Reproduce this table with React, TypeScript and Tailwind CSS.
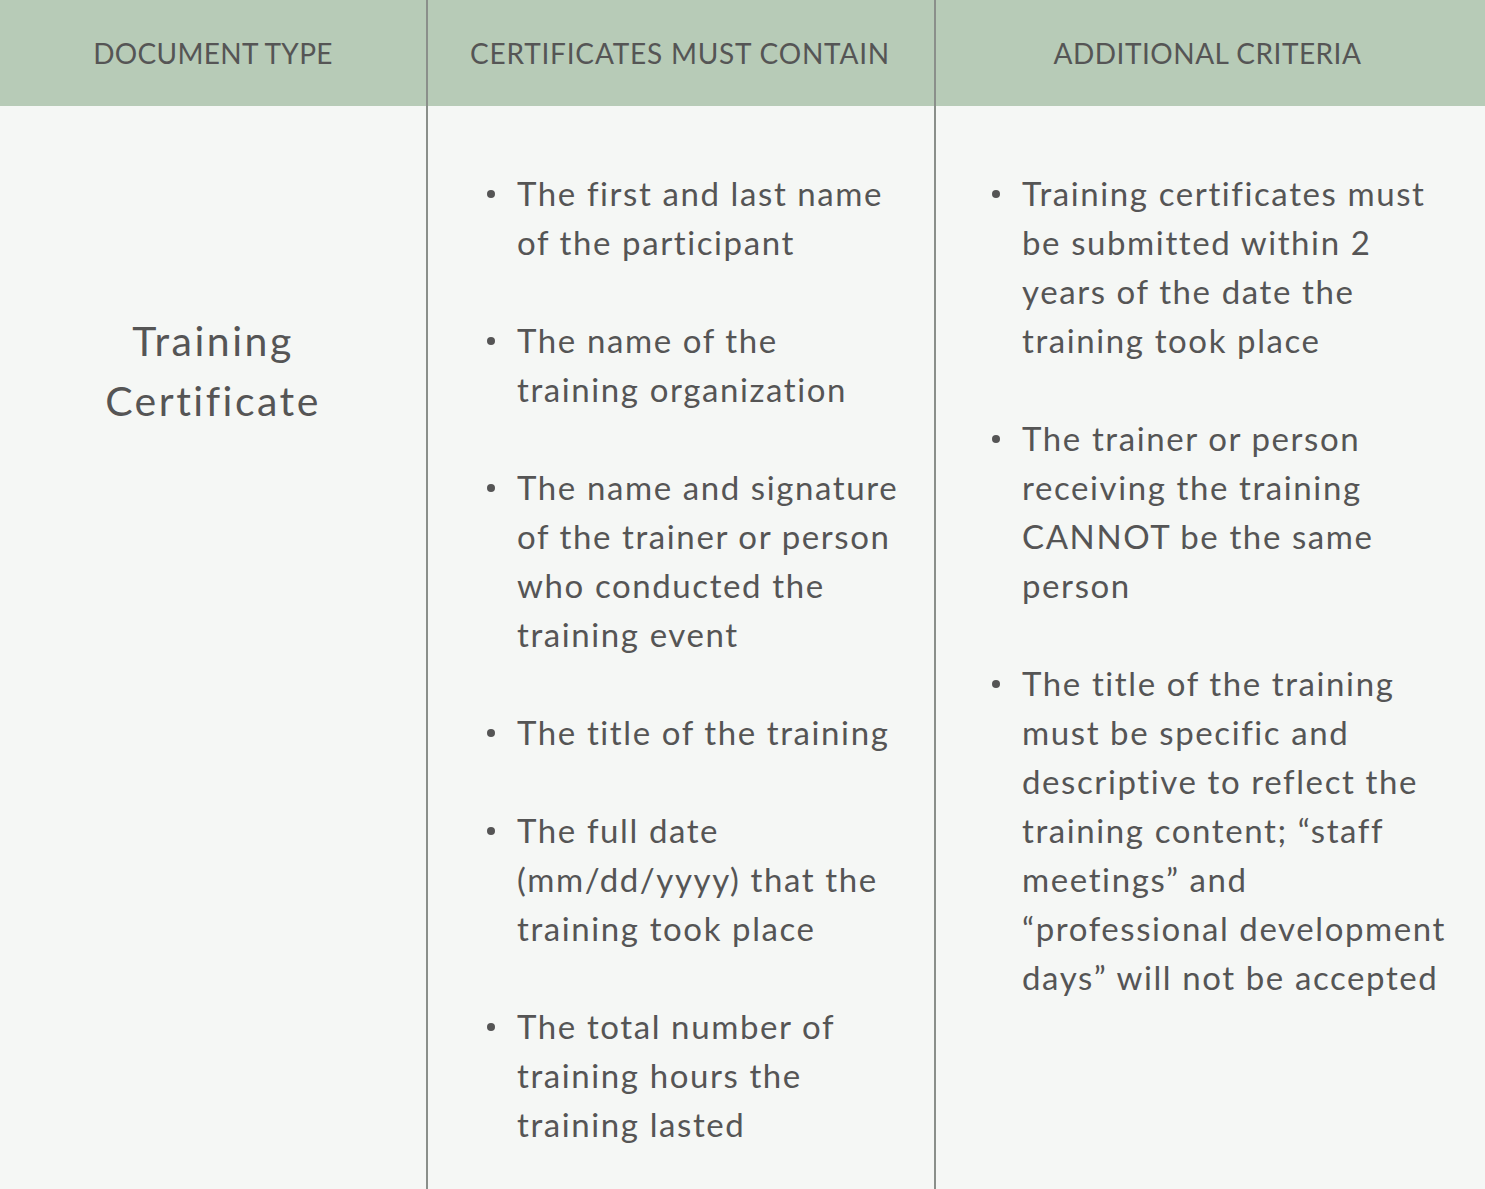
const mustContain: string[][] = [
  ["The first and last name", "of the participant"],
  ["The name of the", "training organization"],
  ["The name and signature", "of the trainer or person", "who conducted the", "training event"],
  ["The title of the training"],
  ["The full date", "(mm/dd/yyyy) that the", "training took place"],
  ["The total number of", "training hours the", "training lasted"],
];

const criteria: string[][] = [
  ["Training certificates must", "be submitted within 2", "years of the date the", "training took place"],
  ["The trainer or person", "receiving the training", "CANNOT be the same", "person"],
  [
    "The title of the training",
    "must be specific and",
    "descriptive to reflect the",
    "training content; \u201cstaff",
    "meetings\u201d and",
    "\u201cprofessional development",
    "days\u201d will not be accepted",
  ],
];

function BulletList({ items }: { items: string[][] }) {
  return (
    <ul className="flex flex-col gap-[49px]">
      {items.map((lines, i) => (
        <li key={i} className="flex">
          <span className="w-[26px] h-[49px] shrink-0 flex items-center">
            <span className="block w-[8px] h-[8px] rounded-full bg-[#555555] -ml-[4px]" />
          </span>
          <div>
            {lines.map((line, j) => (
              <div key={j} className="whitespace-nowrap leading-[49px]">
                {line}
              </div>
            ))}
          </div>
        </li>
      ))}
    </ul>
  );
}

export default function App() {
  return (
    <div
      className="w-[1485px] h-[1189px] bg-[#f5f7f5] text-[#555555] overflow-hidden"
      style={{ fontFamily: "Lato, 'Open Sans', sans-serif" }}
    >
      <div className="grid grid-cols-[426px_508px_1fr] h-full">
        {/* header row */}
        <div className="h-[106px] bg-[#b7cbb7] flex items-center justify-center text-[28px] tracking-[0.3px]">
          DOCUMENT TYPE
        </div>
        <div className="h-[106px] bg-[#b7cbb7] border-l-2 border-[#8a8f8a] flex items-center justify-center text-[28px] tracking-[0.8px] pr-[2px]">
          CERTIFICATES MUST CONTAIN
        </div>
        <div className="h-[106px] bg-[#b7cbb7] border-l-2 border-[#8a8f8a] flex items-center justify-center text-[28px] tracking-[0.5px] pr-[6px]">
          ADDITIONAL CRITERIA
        </div>

        {/* body row */}
        <div className="pt-[205px] text-center text-[41px] leading-[60px] tracking-[2.5px] h-[1083px]">
          <div>Training</div>
          <div>Certificate</div>
        </div>
        <div className="border-l-2 border-[#8a8f8a] pt-[63px] pl-[63px] text-[33px] tracking-[1.6px] h-[1083px]">
          <BulletList items={mustContain} />
        </div>
        <div className="border-l-2 border-[#8a8f8a] pt-[63px] pl-[60px] text-[33px] tracking-[1.6px] h-[1083px]">
          <BulletList items={criteria} />
        </div>
      </div>
    </div>
  );
}
